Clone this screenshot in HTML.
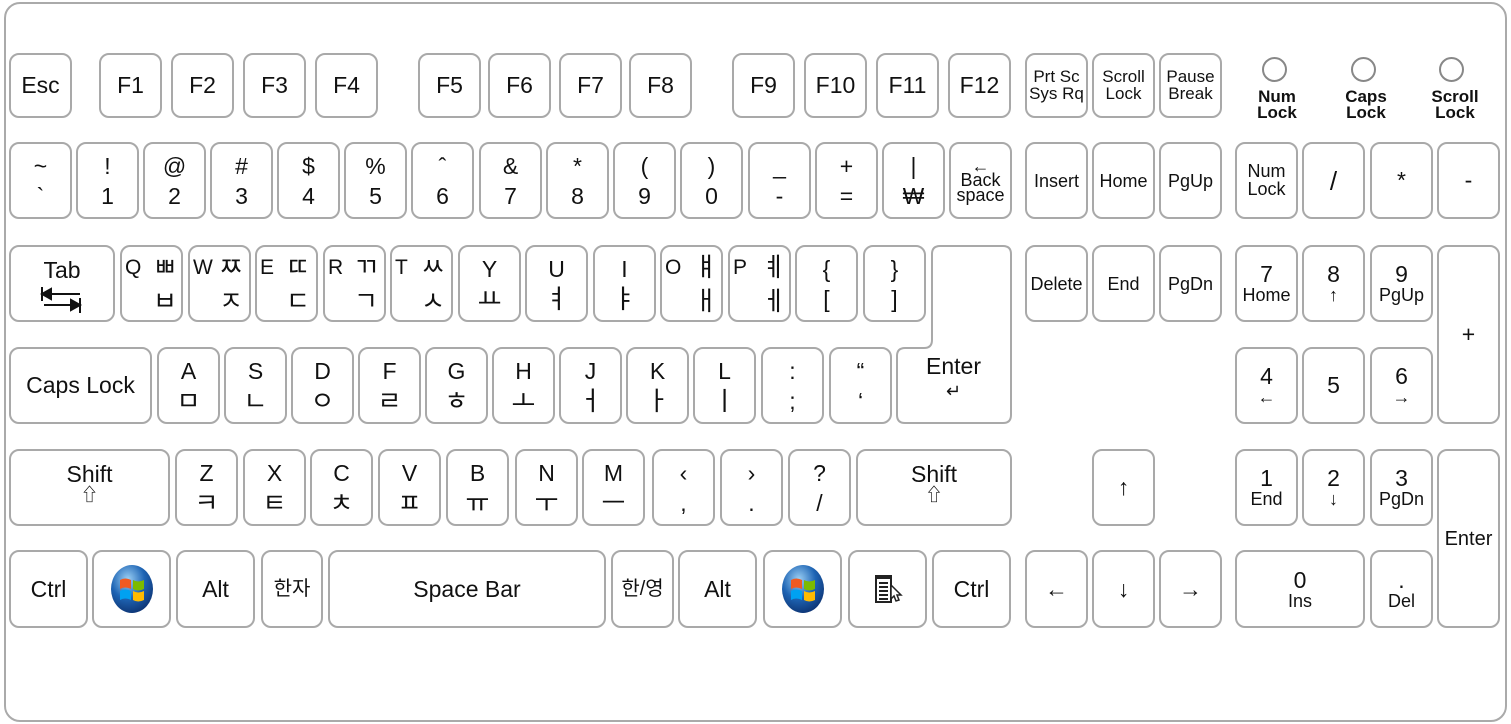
<!DOCTYPE html>
<html><head><meta charset="utf-8"><style>
*{margin:0;padding:0;box-sizing:border-box}
body{width:1511px;height:724px;background:#fff;position:relative;overflow:hidden;font-family:"Liberation Sans","Noto Sans CJK KR",sans-serif;color:#111}
.frame{position:absolute;left:4px;top:2px;width:1503px;height:720px;border:2px solid #aaa;border-radius:16px}
.k{position:absolute;border:2px solid #a9a9a9;border-radius:10px;background:#fff;display:flex;flex-direction:column;align-items:center;justify-content:center;text-align:center;font-size:23px;line-height:1}
.s{font-size:17px;line-height:0.95}
.m{font-size:18px}
.t{justify-content:center;font-size:23px}
.t span{display:block;height:30px;line-height:30px}
.kr span{position:absolute;font-size:21px;line-height:1}
.j{font-size:26px!important}
.led{position:absolute;width:25px;height:25px;border:2px solid #888;border-radius:50%}
.ll{position:absolute;font-size:17px;font-weight:bold;line-height:0.95;text-align:center;width:70px}
.win{width:44px;height:50px}
</style></head><body>
<div class="frame"></div>
<!-- row1 -->
<div class="k" style="left:9px;top:53px;width:63px;height:65px">Esc</div>
<div class="k" style="left:99px;top:53px;width:63px;height:65px">F1</div>
<div class="k" style="left:171px;top:53px;width:63px;height:65px">F2</div>
<div class="k" style="left:243px;top:53px;width:63px;height:65px">F3</div>
<div class="k" style="left:315px;top:53px;width:63px;height:65px">F4</div>
<div class="k" style="left:418px;top:53px;width:63px;height:65px">F5</div>
<div class="k" style="left:488px;top:53px;width:63px;height:65px">F6</div>
<div class="k" style="left:559px;top:53px;width:63px;height:65px">F7</div>
<div class="k" style="left:629px;top:53px;width:63px;height:65px">F8</div>
<div class="k" style="left:732px;top:53px;width:63px;height:65px">F9</div>
<div class="k" style="left:804px;top:53px;width:63px;height:65px">F10</div>
<div class="k" style="left:876px;top:53px;width:63px;height:65px">F11</div>
<div class="k" style="left:948px;top:53px;width:63px;height:65px">F12</div>
<div class="k s" style="left:1025px;top:53px;width:63px;height:65px"><div>Prt Sc<br>Sys Rq</div></div>
<div class="k s" style="left:1092px;top:53px;width:63px;height:65px"><div>Scroll<br>Lock</div></div>
<div class="k s" style="left:1159px;top:53px;width:63px;height:65px"><div>Pause<br>Break</div></div>
<div class="led" style="left:1262px;top:57px"></div>
<div class="led" style="left:1351px;top:57px"></div>
<div class="led" style="left:1439px;top:57px"></div>
<div class="ll" style="left:1242px;top:89px">Num<br>Lock</div>
<div class="ll" style="left:1331px;top:89px">Caps<br>Lock</div>
<div class="ll" style="left:1420px;top:89px">Scroll<br>Lock</div>
<!-- row2 -->
<div class="k t" style="left:9px;top:142px;width:63px;height:77px"><span>~</span><span>`</span></div>
<div class="k t" style="left:76px;top:142px;width:63px;height:77px"><span>!</span><span>1</span></div>
<div class="k t" style="left:143px;top:142px;width:63px;height:77px"><span>@</span><span>2</span></div>
<div class="k t" style="left:210px;top:142px;width:63px;height:77px"><span>#</span><span>3</span></div>
<div class="k t" style="left:277px;top:142px;width:63px;height:77px"><span>$</span><span>4</span></div>
<div class="k t" style="left:344px;top:142px;width:63px;height:77px"><span>%</span><span>5</span></div>
<div class="k t" style="left:411px;top:142px;width:63px;height:77px"><span>ˆ</span><span>6</span></div>
<div class="k t" style="left:479px;top:142px;width:63px;height:77px"><span>&amp;</span><span>7</span></div>
<div class="k t" style="left:546px;top:142px;width:63px;height:77px"><span>*</span><span>8</span></div>
<div class="k t" style="left:613px;top:142px;width:63px;height:77px"><span>(</span><span>9</span></div>
<div class="k t" style="left:680px;top:142px;width:63px;height:77px"><span>)</span><span>0</span></div>
<div class="k t" style="left:748px;top:142px;width:63px;height:77px"><span>_</span><span>-</span></div>
<div class="k t" style="left:815px;top:142px;width:63px;height:77px"><span>+</span><span>=</span></div>
<div class="k t" style="left:882px;top:142px;width:63px;height:77px"><span>|</span><span>₩</span></div>
<div class="k" style="left:949px;top:142px;width:63px;height:77px;font-size:18px;line-height:0.8"><div>←<br>Back<br>space</div></div>
<div class="k m" style="left:1025px;top:142px;width:63px;height:77px">Insert</div>
<div class="k m" style="left:1092px;top:142px;width:63px;height:77px">Home</div>
<div class="k m" style="left:1159px;top:142px;width:63px;height:77px">PgUp</div>
<div class="k m" style="left:1235px;top:142px;width:63px;height:77px;line-height:0.95"><div>Num<br>Lock</div></div>
<div class="k" style="left:1302px;top:142px;width:63px;height:77px;font-size:26px">/</div>
<div class="k" style="left:1370px;top:142px;width:63px;height:77px">*</div>
<div class="k" style="left:1437px;top:142px;width:63px;height:77px">-</div>
<!-- row3 -->
<div class="k" style="left:9px;top:245px;width:106px;height:77px;justify-content:flex-start;padding-top:12px"><div>Tab</div>
<svg width="44" height="30" viewBox="0 0 44 30" style="margin-top:3px"><path d="M2 2V16M2 9H40M2 9l9-5v10z" stroke="#111" stroke-width="2" fill="#111"/><path d="M4 20H40M40 13V28M40 20l-9-5v10z" stroke="#111" stroke-width="2" fill="#111"/></svg></div>
<div class="k kr" style="left:120px;top:245px;width:63px;height:77px"><span style="left:3px;top:10px">Q</span><span class="j" style="left:31px;top:7px">ㅃ</span><span class="j" style="left:31px;top:41px">ㅂ</span></div>
<div class="k kr" style="left:188px;top:245px;width:63px;height:77px"><span style="left:3px;top:10px">W</span><span class="j" style="left:29px;top:7px">ㅉ</span><span class="j" style="left:29px;top:41px">ㅈ</span></div>
<div class="k kr" style="left:255px;top:245px;width:63px;height:77px"><span style="left:3px;top:10px">E</span><span class="j" style="left:29px;top:7px">ㄸ</span><span class="j" style="left:29px;top:41px">ㄷ</span></div>
<div class="k kr" style="left:323px;top:245px;width:63px;height:77px"><span style="left:3px;top:10px">R</span><span class="j" style="left:29px;top:7px">ㄲ</span><span class="j" style="left:29px;top:41px">ㄱ</span></div>
<div class="k kr" style="left:390px;top:245px;width:63px;height:77px"><span style="left:3px;top:10px">T</span><span class="j" style="left:29px;top:7px">ㅆ</span><span class="j" style="left:29px;top:41px">ㅅ</span></div>
<div class="k t" style="left:458px;top:245px;width:63px;height:77px"><span>Y</span><span class="j">ㅛ</span></div>
<div class="k t" style="left:525px;top:245px;width:63px;height:77px"><span>U</span><span class="j">ㅕ</span></div>
<div class="k t" style="left:593px;top:245px;width:63px;height:77px"><span>I</span><span class="j">ㅑ</span></div>
<div class="k kr" style="left:660px;top:245px;width:63px;height:77px"><span style="left:3px;top:10px">O</span><span class="j" style="left:32px;top:7px">ㅒ</span><span class="j" style="left:32px;top:41px">ㅐ</span></div>
<div class="k kr" style="left:728px;top:245px;width:63px;height:77px"><span style="left:3px;top:10px">P</span><span class="j" style="left:32px;top:7px">ㅖ</span><span class="j" style="left:32px;top:41px">ㅔ</span></div>
<div class="k t" style="left:795px;top:245px;width:63px;height:77px"><span>{</span><span>[</span></div>
<div class="k t" style="left:863px;top:245px;width:63px;height:77px"><span>}</span><span>]</span></div>
<svg style="position:absolute;left:894px;top:244px" width="120" height="182" viewBox="0 0 120 182"><path d="M48 2H109Q117 2 117 10V171Q117 179 109 179H11Q3 179 3 171V112Q3 104 11 104H30Q38 104 38 96V10Q38 2 46 2Z" fill="#fff" stroke="#a9a9a9" stroke-width="2"/></svg>
<div style="position:absolute;left:895px;top:355px;width:117px;text-align:center;font-size:23px;line-height:1">Enter<br><span style="font-size:18px">↵</span></div>
<div class="k m" style="left:1025px;top:245px;width:63px;height:77px">Delete</div>
<div class="k m" style="left:1092px;top:245px;width:63px;height:77px">End</div>
<div class="k m" style="left:1159px;top:245px;width:63px;height:77px">PgDn</div>
<div class="k" style="left:1235px;top:245px;width:63px;height:77px"><div>7</div><div class="m">Home</div></div>
<div class="k" style="left:1302px;top:245px;width:63px;height:77px"><div>8</div><div class="m">↑</div></div>
<div class="k" style="left:1370px;top:245px;width:63px;height:77px"><div>9</div><div class="m">PgUp</div></div>
<div class="k" style="left:1437px;top:245px;width:63px;height:179px">+</div>
<!-- row4 -->
<div class="k" style="left:9px;top:347px;width:143px;height:77px">Caps Lock</div>
<div class="k t" style="left:157px;top:347px;width:63px;height:77px"><span>A</span><span class="j">ㅁ</span></div>
<div class="k t" style="left:224px;top:347px;width:63px;height:77px"><span>S</span><span class="j">ㄴ</span></div>
<div class="k t" style="left:291px;top:347px;width:63px;height:77px"><span>D</span><span class="j">ㅇ</span></div>
<div class="k t" style="left:358px;top:347px;width:63px;height:77px"><span>F</span><span class="j">ㄹ</span></div>
<div class="k t" style="left:425px;top:347px;width:63px;height:77px"><span>G</span><span class="j">ㅎ</span></div>
<div class="k t" style="left:492px;top:347px;width:63px;height:77px"><span>H</span><span class="j">ㅗ</span></div>
<div class="k t" style="left:559px;top:347px;width:63px;height:77px"><span>J</span><span class="j">ㅓ</span></div>
<div class="k t" style="left:626px;top:347px;width:63px;height:77px"><span>K</span><span class="j">ㅏ</span></div>
<div class="k t" style="left:693px;top:347px;width:63px;height:77px"><span>L</span><span class="j">ㅣ</span></div>
<div class="k t" style="left:761px;top:347px;width:63px;height:77px"><span>:</span><span>;</span></div>
<div class="k t" style="left:829px;top:347px;width:63px;height:77px"><span>“</span><span>‘</span></div>
<div class="k" style="left:1235px;top:347px;width:63px;height:77px"><div>4</div><div class="m">←</div></div>
<div class="k" style="left:1302px;top:347px;width:63px;height:77px">5</div>
<div class="k" style="left:1370px;top:347px;width:63px;height:77px"><div>6</div><div class="m">→</div></div>
<!-- row5 -->
<div class="k" style="left:9px;top:449px;width:161px;height:77px;justify-content:flex-start;padding-top:12px"><div>Shift</div><div class="m">⇧</div></div>
<div class="k t" style="left:175px;top:449px;width:63px;height:77px"><span>Z</span><span class="j">ㅋ</span></div>
<div class="k t" style="left:243px;top:449px;width:63px;height:77px"><span>X</span><span class="j">ㅌ</span></div>
<div class="k t" style="left:310px;top:449px;width:63px;height:77px"><span>C</span><span class="j">ㅊ</span></div>
<div class="k t" style="left:378px;top:449px;width:63px;height:77px"><span>V</span><span class="j">ㅍ</span></div>
<div class="k t" style="left:446px;top:449px;width:63px;height:77px"><span>B</span><span class="j">ㅠ</span></div>
<div class="k t" style="left:515px;top:449px;width:63px;height:77px"><span>N</span><span class="j">ㅜ</span></div>
<div class="k t" style="left:582px;top:449px;width:63px;height:77px"><span>M</span><span class="j">ㅡ</span></div>
<div class="k t" style="left:652px;top:449px;width:63px;height:77px"><span>‹</span><span>,</span></div>
<div class="k t" style="left:720px;top:449px;width:63px;height:77px"><span>›</span><span>.</span></div>
<div class="k t" style="left:788px;top:449px;width:63px;height:77px"><span>?</span><span>/</span></div>
<div class="k" style="left:856px;top:449px;width:156px;height:77px;justify-content:flex-start;padding-top:12px"><div>Shift</div><div class="m">⇧</div></div>
<div class="k" style="left:1092px;top:449px;width:63px;height:77px">↑</div>
<div class="k" style="left:1235px;top:449px;width:63px;height:77px"><div>1</div><div class="m">End</div></div>
<div class="k" style="left:1302px;top:449px;width:63px;height:77px"><div>2</div><div class="m">↓</div></div>
<div class="k" style="left:1370px;top:449px;width:63px;height:77px"><div>3</div><div class="m">PgDn</div></div>
<div class="k" style="left:1437px;top:449px;width:63px;height:179px;font-size:20px">Enter</div>
<!-- row6 -->
<div class="k" style="left:9px;top:550px;width:79px;height:78px">Ctrl</div>
<div class="k" style="left:92px;top:550px;width:79px;height:78px"><svg class="win" viewBox="0 0 44 50"><defs><radialGradient id="g" cx="0.4" cy="0.3" r="0.8"><stop offset="0" stop-color="#9bd0f5"/><stop offset="0.5" stop-color="#1e64b4"/><stop offset="1" stop-color="#0a2a66"/></radialGradient></defs><ellipse cx="22" cy="25" rx="21" ry="24" fill="url(#g)"/><path d="M10 16q5-3 11 0v9q-6-3-11 0z" fill="#f05a22"/><path d="M23 16q5 3 11 0v9q-6 3-11 0z" fill="#7cbb00"/><path d="M10 27q5-3 11 0v9q-6-3-11 0z" fill="#00a1f1"/><path d="M23 27q5 3 11 0v9q-6 3-11 0z" fill="#ffbb00"/></svg></div>
<div class="k" style="left:176px;top:550px;width:79px;height:78px">Alt</div>
<div class="k" style="left:261px;top:550px;width:62px;height:78px;font-size:20px">한자</div>
<div class="k" style="left:328px;top:550px;width:278px;height:78px">Space Bar</div>
<div class="k" style="left:611px;top:550px;width:63px;height:78px;font-size:20px">한/영</div>
<div class="k" style="left:678px;top:550px;width:79px;height:78px">Alt</div>
<div class="k" style="left:763px;top:550px;width:79px;height:78px"><svg class="win" viewBox="0 0 44 50"><ellipse cx="22" cy="25" rx="21" ry="24" fill="url(#g)"/><path d="M10 16q5-3 11 0v9q-6-3-11 0z" fill="#f05a22"/><path d="M23 16q5 3 11 0v9q-6 3-11 0z" fill="#7cbb00"/><path d="M10 27q5-3 11 0v9q-6-3-11 0z" fill="#00a1f1"/><path d="M23 27q5 3 11 0v9q-6 3-11 0z" fill="#ffbb00"/></svg></div>
<div class="k" style="left:848px;top:550px;width:79px;height:78px"><svg width="30" height="32" viewBox="0 0 30 32"><rect x="3" y="3" width="15" height="26" fill="#fff" stroke="#222" stroke-width="2"/><rect x="3" y="2" width="15" height="4" fill="#222"/><path d="M6 10h9M6 14h9M6 18h9M6 22h9M6 26h9" stroke="#222" stroke-width="2"/><path d="M18 12l10 10-4 0 2 5-3 1-2-5-3 3z" fill="#fff" stroke="#222" stroke-width="1.5"/></svg></div>
<div class="k" style="left:932px;top:550px;width:79px;height:78px">Ctrl</div>
<div class="k" style="left:1025px;top:550px;width:63px;height:78px">←</div>
<div class="k" style="left:1092px;top:550px;width:63px;height:78px">↓</div>
<div class="k" style="left:1159px;top:550px;width:63px;height:78px">→</div>
<div class="k" style="left:1235px;top:550px;width:130px;height:78px"><div>0</div><div class="m">Ins</div></div>
<div class="k" style="left:1370px;top:550px;width:63px;height:78px"><div>.</div><div class="m">Del</div></div>
</body></html>
